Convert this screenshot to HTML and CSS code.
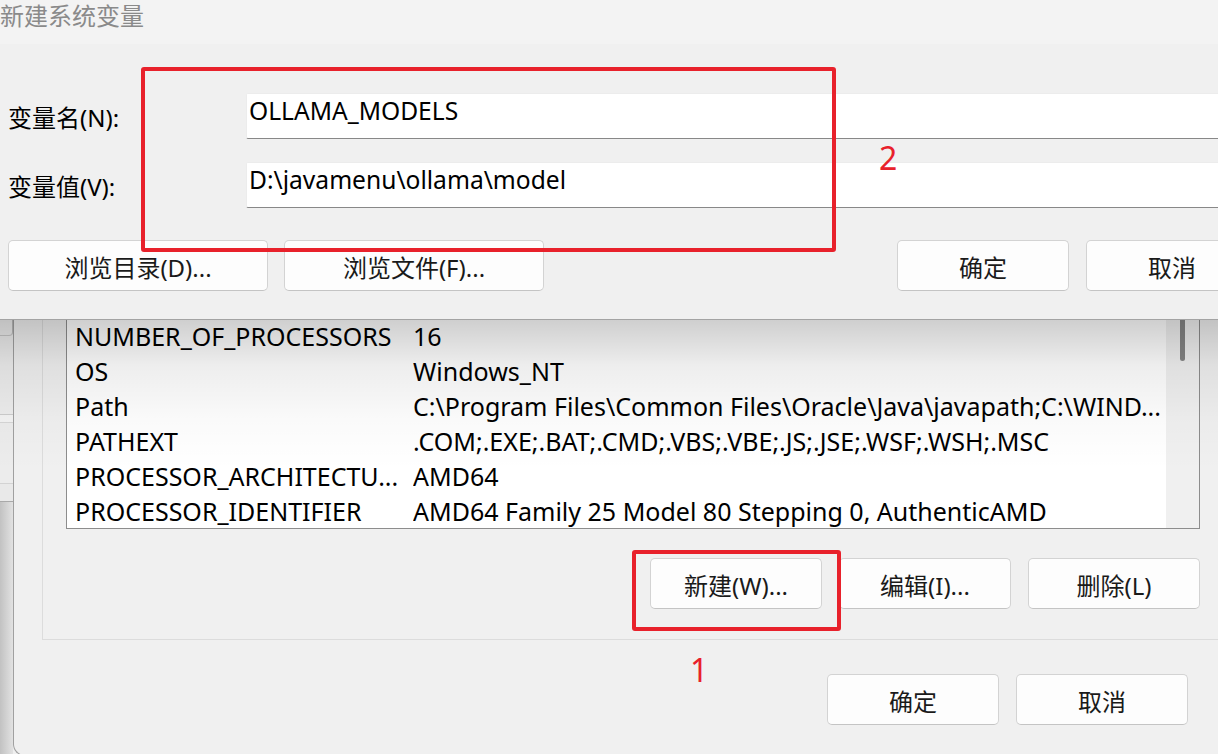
FILE: index.html
```html
<!DOCTYPE html>
<html lang="zh-CN">
<head>
<meta charset="utf-8">
<title>新建系统变量</title>
<link rel="stylesheet" href="styles.css">
</head>
<body>
<div class="screen">
  <section class="dialog">
    <div class="title">新建系统变量</div>
    <div class="dlg-body">
      <div class="field">
        <span class="label">变量名(N):</span>
        <div class="input">OLLAMA_MODELS</div>
      </div>
      <div class="field">
        <span class="label">变量值(V):</span>
        <div class="input">D:\javamenu\ollama\model</div>
      </div>
      <div class="btn-row">
        <div class="btn-group">
          <button class="btn wide">浏览目录(D)...</button>
          <button class="btn wide">浏览文件(F)...</button>
        </div>
        <div class="btn-group push">
          <button class="btn">确定</button>
          <button class="btn">取消</button>
        </div>
      </div>
    </div>
  </section>

  <section class="lower">
    <div class="behind">
      <div class="b-a"><div class="b-ctl"></div></div>
      <div class="b-b"></div>
      <div class="b-c"></div>
      <div class="b-d"></div>
      <div class="b-e"></div>
    </div>
    <div class="window">
      <div class="groupbox">
        <div class="list">
          <div class="rows">
            <div class="row"><span>NUMBER_OF_PROCESSORS</span><span>16</span></div>
            <div class="row"><span>OS</span><span>Windows_NT</span></div>
            <div class="row"><span>Path</span><span>C:\Program Files\Common Files\Oracle\Java\javapath;C:\WIND...</span></div>
            <div class="row"><span>PATHEXT</span><span>.COM;.EXE;.BAT;.CMD;.VBS;.VBE;.JS;.JSE;.WSF;.WSH;.MSC</span></div>
            <div class="row"><span>PROCESSOR_ARCHITECTU...</span><span>AMD64</span></div>
            <div class="row"><span>PROCESSOR_IDENTIFIER</span><span>AMD64 Family 25 Model 80 Stepping 0, AuthenticAMD</span></div>
          </div>
          <div class="scrollbar"><div class="thumb"></div></div>
        </div>
        <div class="list-btns">
          <button class="btn">新建(W)...</button>
          <button class="btn">编辑(I)...</button>
          <button class="btn">删除(L)</button>
        </div>
      </div>
      <div class="footer-btns">
        <button class="btn">确定</button>
        <button class="btn">取消</button>
      </div>
    </div>
  </section>

  <div class="mark mark-2"></div>
  <span class="num num-2">2</span>
  <div class="mark mark-1"></div>
  <span class="num num-1">1</span>
</div>
</body>
</html>
```

FILE: styles.css
```css
* { box-sizing: border-box; }

body {
  margin: 0;
  background: #f0f0f0;
  font-family: "Noto Sans", "Noto Sans CJK SC", sans-serif;
  color: #000;
}

.screen {
  position: relative;
  width: 1218px;
  height: 754px;
  overflow: hidden;
  background: #f0f0f0;
}

/* ---------- top dialog ---------- */
.dialog {
  width: 1275px;
  height: 320px;
  background: #f0f0f0;
  border-bottom: 1px solid #a3a3a3;
}

.title {
  height: 44px;
  background: #f3f3f3;
  color: #8a8a8a;
  font-size: 24px;
  line-height: 32px;
  white-space: nowrap;
}

.dlg-body {
  padding: 49px 17px 0 8px;
}

.field {
  display: grid;
  grid-template-columns: 238px 1fr;
  align-items: center;
  height: 46px;
}

.field + .field { margin-top: 23px; }

.label {
  font-size: 24px;
  white-space: nowrap;
}

.input {
  height: 46px;
  background: #fff;
  border: 1px solid #ececec;
  border-bottom-color: #888;
  border-radius: 2px;
  padding-left: 2px;
  font-size: 24.6px;
  line-height: 34px;
  white-space: nowrap;
}

.btn-row {
  display: flex;
  margin-top: 32px;
}

.btn-group {
  display: flex;
  gap: 16px;
}

.btn-group.push {
  margin-left: auto;
  gap: 17px;
}

.btn {
  width: 172px;
  height: 51px;
  padding: 1px 0 0;
  background: #fdfdfd;
  border: 1px solid #d3d3d3;
  border-bottom-color: #c4c4c4;
  border-radius: 5px;
  font-family: inherit;
  font-size: 24px;
  color: #1a1a1a;
  white-space: nowrap;
}

.btn.wide { width: 260px; }

/* ---------- window behind ---------- */
.lower {
  position: relative;
  display: flex;
  width: 1275px;
  height: 434px;
}

.lower::after {
  content: "";
  position: absolute;
  left: 0;
  top: 0;
  right: 0;
  height: 150px;
  background: linear-gradient(rgba(0,0,0,0.19), rgba(0,0,0,0.07) 45px, rgba(0,0,0,0.02) 100px, rgba(0,0,0,0) 150px);
  pointer-events: none;
}

.behind {
  width: 13px;
  flex: none;
  display: flex;
  flex-direction: column;
}

.b-a { height: 94px; background: #ededed; }
.b-ctl {
  width: 13px;
  height: 16px;
  border-right: 1px solid #b9b9b9;
  border-bottom: 1px solid #c9c9c9;
  border-bottom-right-radius: 4px;
}
.b-b { height: 8px; background: #f3f3f3; border-top: 1px solid #cdcdcd; }
.b-c { height: 61px; background: #ececec; border-top: 1px solid #d6d6d6; }
.b-d { height: 18px; background: #e9e9e9; border-top: 1px solid #d3d3d3; }
.b-e {
  flex: 1;
  border-top: 1px solid #a9a9a9;
  background: linear-gradient(to right, #c2c2c2, #e2e2e2);
}

.window {
  flex: 1;
  height: 436px;
  background: #f0f0f0;
  border-left: 1px solid #a0a0a0;
  border-bottom: 1px solid #a0a0a0;
  border-bottom-left-radius: 12px;
  padding-left: 28px;
}

.groupbox {
  width: 1183px;
  border-left: 1px solid #dcdcdc;
  border-bottom: 1px solid #dcdcdc;
  border-right: 1px solid #dcdcdc;
  padding: 0 24px 30px 23px;
}

.list {
  display: flex;
  height: 209px;
  background: #fff;
  border: 1px solid #8d8d8d;
  border-top: none;
  overflow: hidden;
}

.rows {
  flex: 1;
  min-width: 0;
  padding-left: 8px;
  margin-top: -1px;
  font-size: 25px;
}

.row {
  display: grid;
  grid-template-columns: 338px 1fr;
  height: 35px;
  line-height: 35px;
  white-space: nowrap;
}

.row span { overflow: hidden; }

.scrollbar {
  width: 33px;
  flex: none;
  background: #f0f0f0;
}

.thumb {
  width: 5px;
  height: 41px;
  margin-left: 14px;
  background: #858585;
  border-radius: 0 0 3px 3px;
}

.list-btns {
  display: flex;
  justify-content: flex-end;
  gap: 17px;
  margin-top: 29px;
}

.footer-btns {
  width: 1183px;
  display: flex;
  justify-content: flex-end;
  gap: 17px;
  margin-top: 34px;
  padding-right: 37px;
}

/* ---------- annotations ---------- */
.mark {
  position: absolute;
  border: 4px solid #e8212b;
  border-radius: 3px;
}

.mark-2 { left: 141px; top: 67px; width: 695px; height: 185px; }
.mark-1 { left: 632px; top: 550px; width: 209px; height: 81px; }

.num {
  position: absolute;
  color: #e8212b;
  font-size: 32px;
  line-height: 32px;
}

.num-2 { left: 879px; top: 142px; }
.num-1 { left: 690px; top: 654px; }
```
